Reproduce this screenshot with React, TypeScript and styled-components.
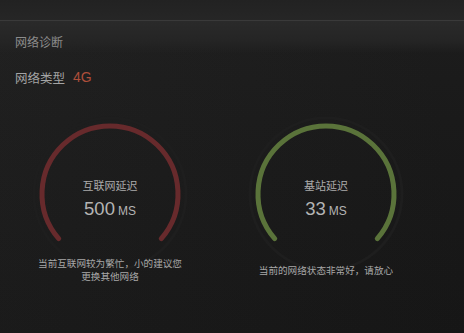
import styled, { createGlobalStyle } from "styled-components";

const GlobalStyle = createGlobalStyle`
    html, body {
        margin: 0;
        padding: 0;
        background: #181818;
    }
    body {
        font-family: "Liberation Sans", "Noto Sans CJK SC", sans-serif;
    }
`;

type GaugeData = {
    title: string;
    value: number;
    color: string;
    description: string;
};

const gauges: GaugeData[] = [
    {
        title: "互联网延迟",
        value: 500,
        color: "#672a2c",
        description: "当前互联网较为繁忙，小的建议您更换其他网络"
    },
    {
        title: "基站延迟",
        value: 33,
        color: "#5a733a",
        description: "当前的网络状态非常好，请放心"
    }
];

// arc: r=68 around (80,80), gap of ~100deg at the bottom
const ARC = "M 28.7 124.6 A 68 68 0 1 1 131.3 124.6";

function Gauge({ title, value, color, description }: GaugeData) {
    return (
        <GaugeStyled>
            <div className="dial">
                <svg width="160" height="160" viewBox="0 0 160 160">
                    <circle cx="80" cy="80" r="76" fill="none" stroke="#1e1e1e" strokeWidth="3" />
                    <path d={ARC} fill="none" stroke={color} strokeWidth="5" strokeLinecap="round" />
                </svg>
                <h4>{title}</h4>
                <p className="value">
                    {value}
                    <span>MS</span>
                </p>
            </div>
            <div className="desc">
                <p>{description}</p>
            </div>
        </GaugeStyled>
    );
}

function App() {
    return (
        <>
            <GlobalStyle />
            <PageStyled>
                <TopStrip />
                <HeaderBand>
                    <h3>网络诊断</h3>
                </HeaderBand>
                <TypeRow>
                    <span className="label">网络类型</span>
                    <span className="type">4G</span>
                </TypeRow>
                <GaugeRow>
                    {gauges.map((g) => (
                        <Gauge key={g.title} {...g} />
                    ))}
                </GaugeRow>
            </PageStyled>
        </>
    );
}

const PageStyled = styled.div`
    width: 464px;
    height: 333px;
    overflow: hidden;
    background:
        linear-gradient(90deg, rgba(255, 255, 255, 0.012) 0%, rgba(0, 0, 0, 0.08) 100%),
        linear-gradient(180deg, #1f1f1f 0px, #1c1c1c 120px, #181818 333px);
    display: flex;
    flex-direction: column;
`;

const TopStrip = styled.div`
    height: 20px;
    background: linear-gradient(180deg, #222 0%, #262626 100%);
    border-bottom: 1px solid #3a3a3a;
`;

const HeaderBand = styled.div`
    height: 32px;
    padding: 14px 15px 0;
    box-sizing: border-box;
    background: linear-gradient(180deg, #2a2a2a 0%, #252525 60%, rgba(30, 30, 30, 0) 100%);
    h3 {
        margin: 0;
        font-size: 12px;
        line-height: 16px;
        font-weight: normal;
        color: #8c8c8c;
    }
`;

const TypeRow = styled.div`
    display: flex;
    align-items: center;
    gap: 8px;
    margin-top: 15px;
    padding-left: 15px;
    height: 18px;
    .label {
        font-size: 12.5px;
        color: #a4a4a4;
    }
    .type {
        font-size: 14px;
        color: #ad4e3a;
    }
`;

const GaugeRow = styled.div`
    display: grid;
    grid-template-columns: 216px 216px;
    margin-top: 28px;
    padding-left: 2px;
`;

const GaugeStyled = styled.div`
    display: flex;
    flex-direction: column;
    align-items: center;
    .dial {
        position: relative;
        width: 160px;
        height: 136px;
        display: flex;
        flex-direction: column;
        align-items: center;
        padding-top: 64px;
        box-sizing: border-box;
        svg {
            position: absolute;
            left: 0;
            top: 0;
        }
        h4 {
            position: relative;
            margin: 0;
            font-size: 11px;
            line-height: 16px;
            font-weight: normal;
            color: #ababab;
        }
        .value {
            position: relative;
            margin: 4px 0 0;
            font-size: 18.5px;
            line-height: 22px;
            color: #b4b4b4;
            span {
                font-size: 12px;
                margin-left: 3px;
            }
        }
    }
    .desc {
        position: relative;
        width: 150px;
        height: 40px;
        display: flex;
        align-items: center;
        justify-content: center;
        p {
            margin: 0;
            font-size: 9.6px;
            line-height: 13px;
            text-align: center;
            color: #a8a8a8;
        }
    }
`;

export default App;
